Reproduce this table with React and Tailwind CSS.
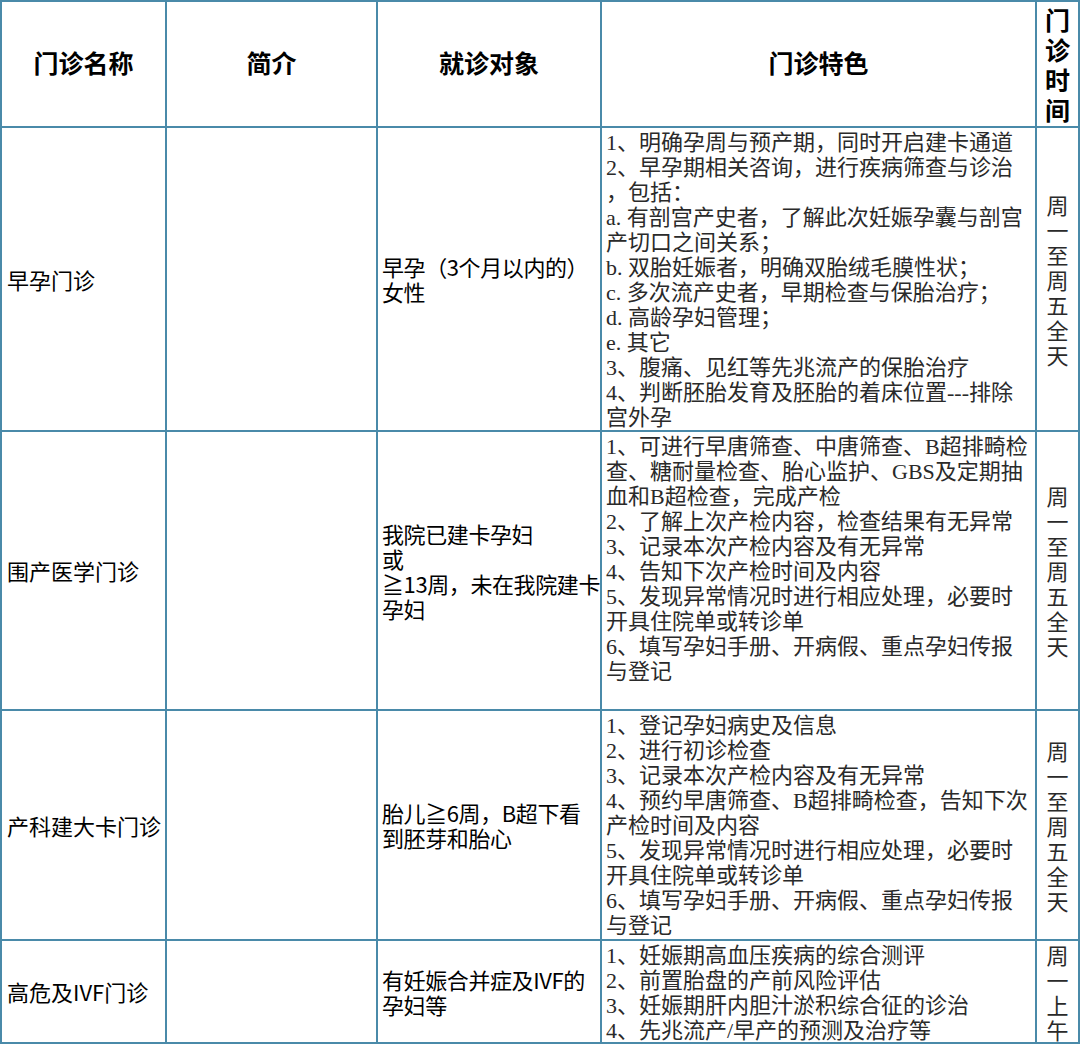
const SANS = { fontFamily: '"Noto Sans CJK SC", "Liberation Sans", sans-serif' };

const rows = [
  {
    name: '早孕门诊',
    target: ['早孕（3个月以内的）', '女性'],
    features: [
      '1、明确孕周与预产期，同时开启建卡通道',
      '2、早孕期相关咨询，进行疾病筛查与诊治',
      '，包括：',
      'a. 有剖宫产史者，了解此次妊娠孕囊与剖宫',
      '产切口之间关系；',
      'b. 双胎妊娠者，明确双胎绒毛膜性状；',
      'c. 多次流产史者，早期检查与保胎治疗；',
      'd. 高龄孕妇管理；',
      'e. 其它',
      '3、腹痛、见红等先兆流产的保胎治疗',
      '4、判断胚胎发育及胚胎的着床位置---排除',
      '宫外孕',
    ],
    time: '周一至周五全天',
  },
  {
    name: '围产医学门诊',
    target: ['我院已建卡孕妇', '或', '≧13周，未在我院建卡', '孕妇'],
    features: [
      '1、可进行早唐筛查、中唐筛查、B超排畸检',
      '查、糖耐量检查、胎心监护、GBS及定期抽',
      '血和B超检查，完成产检',
      '2、了解上次产检内容，检查结果有无异常',
      '3、记录本次产检内容及有无异常',
      '4、告知下次产检时间及内容',
      '5、发现异常情况时进行相应处理，必要时',
      '开具住院单或转诊单',
      '6、填写孕妇手册、开病假、重点孕妇传报',
      '与登记',
    ],
    time: '周一至周五全天',
  },
  {
    name: '产科建大卡门诊',
    target: ['胎儿≧6周，B超下看', '到胚芽和胎心'],
    features: [
      '1、登记孕妇病史及信息',
      '2、进行初诊检查',
      '3、记录本次产检内容及有无异常',
      '4、预约早唐筛查、B超排畸检查，告知下次',
      '产检时间及内容',
      '5、发现异常情况时进行相应处理，必要时',
      '开具住院单或转诊单',
      '6、填写孕妇手册、开病假、重点孕妇传报',
      '与登记',
    ],
    time: '周一至周五全天',
  },
  {
    name: '高危及IVF门诊',
    target: ['有妊娠合并症及IVF的', '孕妇等'],
    features: [
      '1、妊娠期高血压疾病的综合测评',
      '2、前置胎盘的产前风险评估',
      '3、妊娠期肝内胆汁淤积综合征的诊治',
      '4、先兆流产/早产的预测及治疗等',
    ],
    time: '周一上午',
  },
];

function HeaderCell({ children }) {
  return (
    <div className="flex items-center justify-center bg-white pb-[2px] text-[25px] font-bold text-black">
      {children}
    </div>
  );
}

function Row({ row }) {
  return (
    <>
      <div className="flex items-center overflow-hidden whitespace-nowrap bg-white pl-[5px] text-[22px] leading-[25px] text-black">
        {row.name}
      </div>
      <div className="bg-white" />
      <div className="flex flex-col justify-center overflow-hidden whitespace-nowrap bg-white pl-[4px] text-[22px] leading-[25px] tracking-[-0.4px] text-black">
        {row.target.map((line, i) => (
          <span key={i}>{line}</span>
        ))}
      </div>
      <div
        className="flex flex-col overflow-hidden whitespace-nowrap bg-white pl-[4px] pt-[2px] text-[22px] leading-[25px] text-[#2a2a2a]"
        style={{ fontFamily: '"Liberation Serif", "Noto Sans CJK SC", serif' }}
      >
        {row.features.map((line, i) => (
          <span key={i}>{line}</span>
        ))}
      </div>
      <div className="flex flex-col items-center justify-center bg-white text-[22px] leading-[25px] text-[#2a2a2a]">
        {row.time.split('').map((c, i) => (
          <span key={i}>{c}</span>
        ))}
      </div>
    </>
  );
}

export default function App() {
  return (
    <div
      className="grid h-[1044px] w-[1080px] grid-cols-[163px_209px_222px_433px_41px] grid-rows-[124px_302px_277px_228px_101px] gap-[2px] bg-[#4a8aa9] p-[2px]"
      style={SANS}
    >
      <HeaderCell>门诊名称</HeaderCell>
      <HeaderCell>简介</HeaderCell>
      <HeaderCell>就诊对象</HeaderCell>
      <HeaderCell>门诊特色</HeaderCell>
      <div className="flex flex-col items-center justify-center bg-white text-[25px] font-bold leading-[30px] text-black">
        {'门诊时间'.split('').map((c, i) => (
          <span key={i}>{c}</span>
        ))}
      </div>

      {rows.map((row) => (
        <Row key={row.name} row={row} />
      ))}
    </div>
  );
}
